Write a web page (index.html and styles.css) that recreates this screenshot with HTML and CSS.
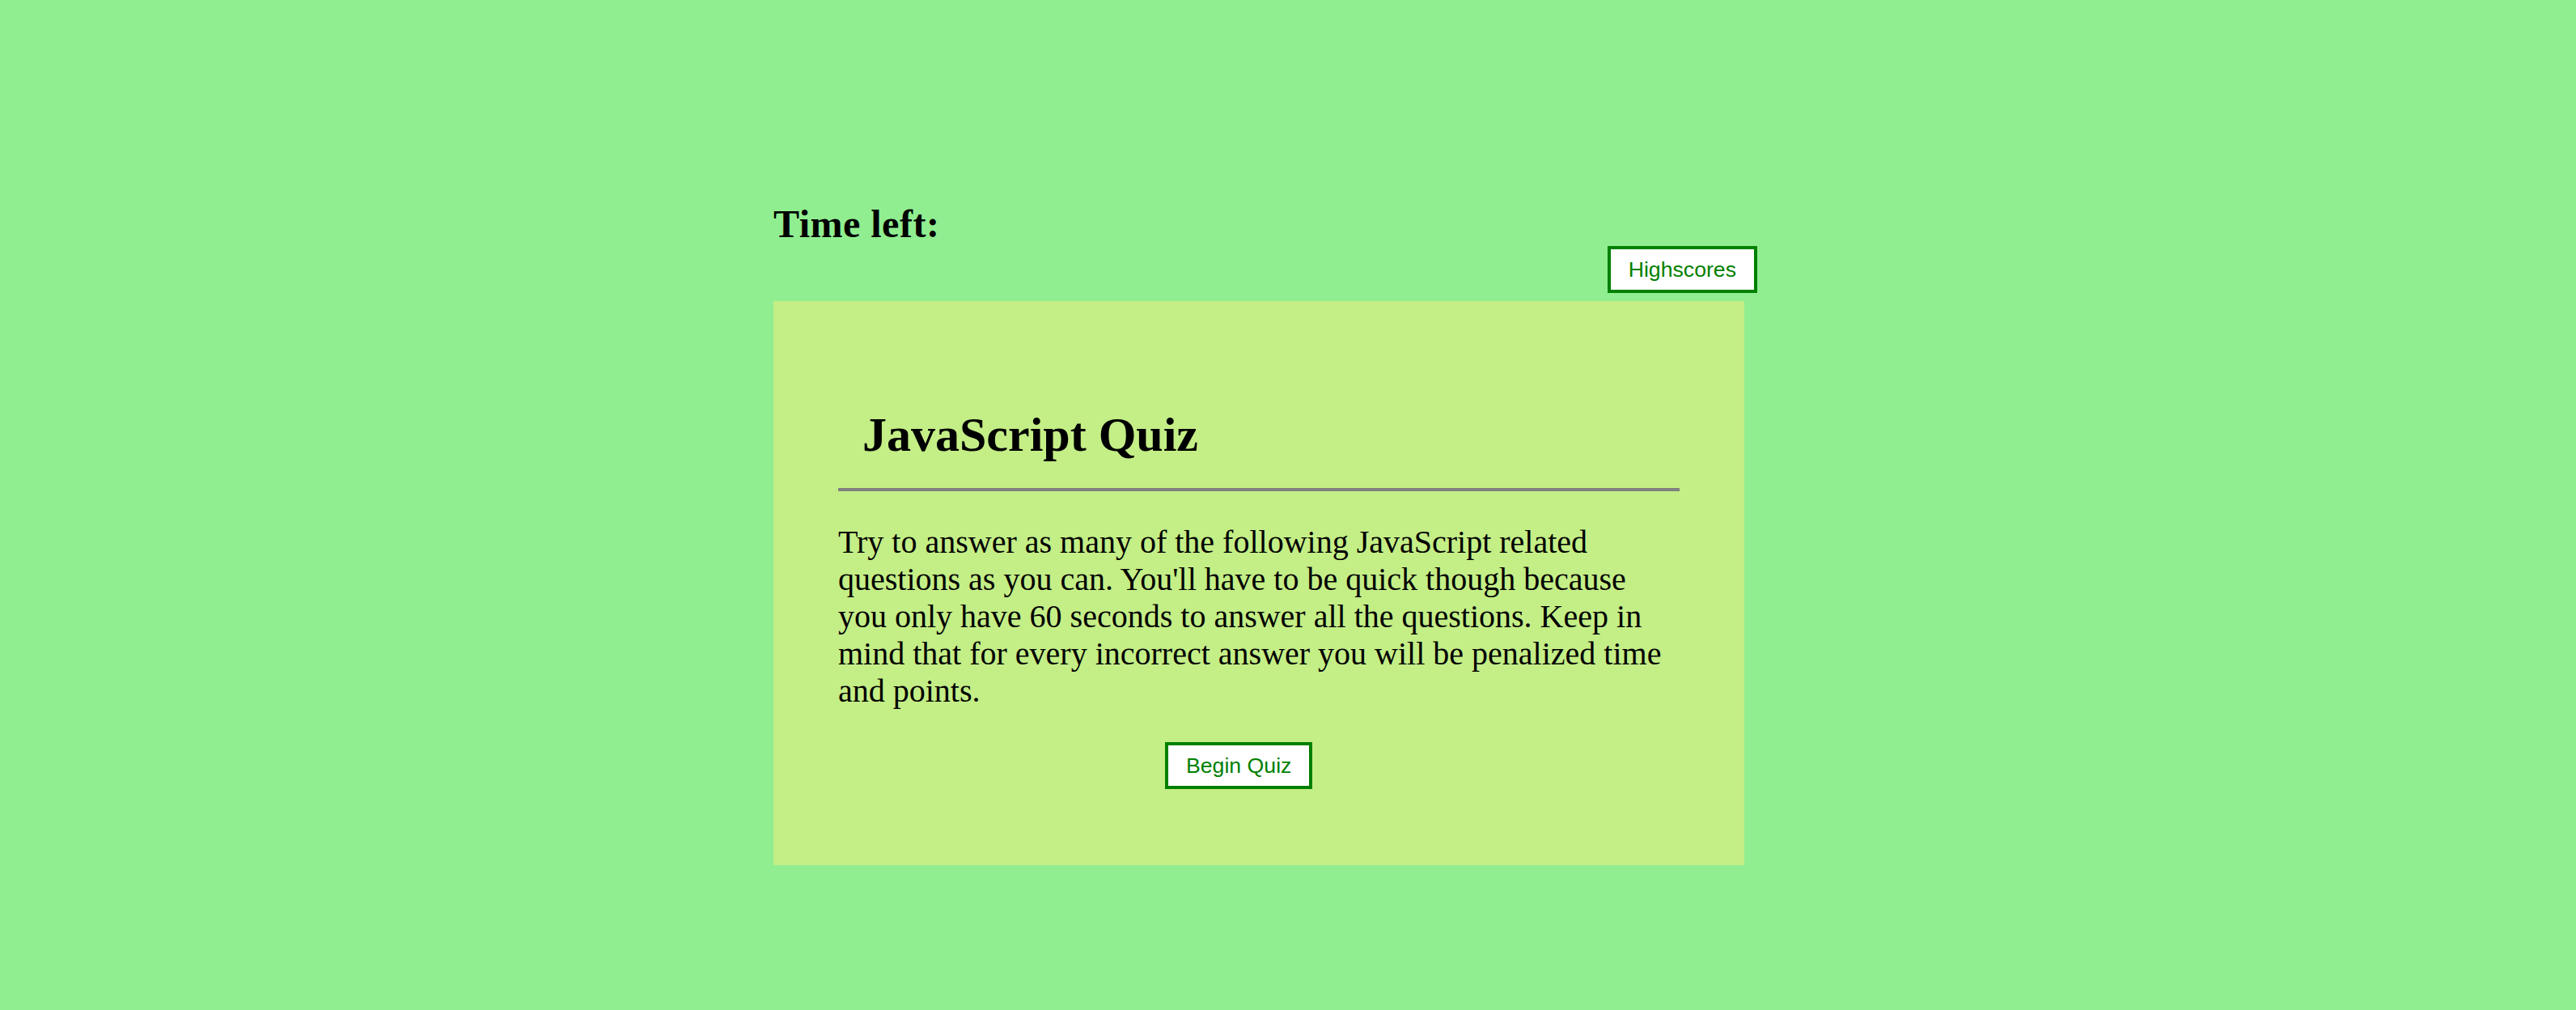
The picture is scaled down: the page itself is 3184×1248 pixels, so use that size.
FILE: index.html
```html
<!DOCTYPE html>
<html lang="en">
<head>
<meta charset="utf-8">
<title>JavaScript Quiz</title>
<link rel="stylesheet" href="styles.css">
</head>
<body>
<div class="page">
  <h2 class="timer">Time left: <span class="time"></span></h2>
  <div class="topbar">
    <button class="btn">Highscores</button>
  </div>
  <main class="card">
    <h1 class="title">JavaScript Quiz</h1>
    <hr class="rule">
    <p class="intro">Try to answer as many of the following JavaScript related questions as you can. You'll have to be quick though because you only have 60 seconds to answer all the questions. Keep in mind that for every incorrect answer you will be penalized time and points.</p>
    <div class="actions">
      <button class="btn">Begin Quiz</button>
    </div>
  </main>
</div>
</body>
</html>
```

FILE: styles.css
```css
html, body {
  margin: 0;
  padding: 0;
  background: #90ee90;
}

body {
  font-family: "Liberation Serif", "Times New Roman", serif;
  color: #000;
  height: 1248px;
  overflow: hidden;
}

.page {
  width: 1216px;
  margin-left: 956px;
  padding-top: 249px;
}

.timer {
  margin: 0;
  font-size: 48px;
  font-weight: bold;
  line-height: 55px;
  letter-spacing: 0.5px;
}

.topbar {
  display: flex;
  justify-content: flex-end;
  margin-bottom: 10px;
}

.btn {
  font-family: "Liberation Sans", Arial, sans-serif;
  font-size: 26.67px;
  line-height: 30px;
  color: #008000;
  background: #ffffff;
  border: 4px solid #008000;
  padding: 10px 22px;
  margin: 0;
  cursor: pointer;
}

.card {
  width: 1040px;
  background: #c4ee86;
  padding: 80px 80px 94px 80px;
}

.title {
  margin: 51px 0 31px 0;
  padding-left: 30px;
  font-size: 60px;
  font-weight: bold;
  line-height: 69px;
}

.rule {
  margin: 0;
  border: 0;
  border-top: 4px solid #808080;
  height: 0;
}

.intro {
  margin: 40px 0 40px 0;
  font-size: 40px;
  line-height: 46px;
}

.actions {
  display: flex;
  padding-left: 404px;
}
```
